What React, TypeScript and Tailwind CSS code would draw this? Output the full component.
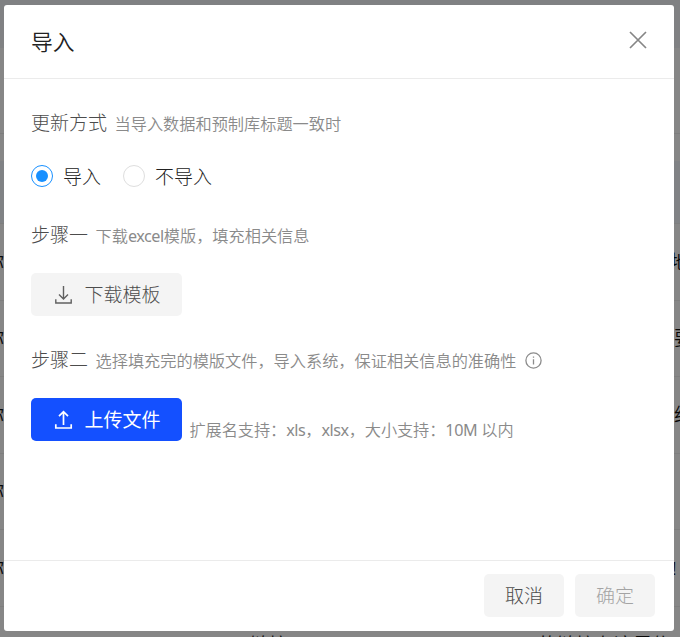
import type { ReactNode } from 'react';

const rows = [
  { left: '你', right: '地', shift: '-indent-[4px]' },
  { left: '你', right: '要', shift: '' },
  { left: '你', right: '织', shift: '' },
  { left: '你', right: '', shift: '' },
  { left: '你', right: '!', shift: '-indent-[2px]' },
];

function Backdrop() {
  return (
    <div className="h-full overflow-hidden bg-[#868686] text-[19px] leading-[24px] font-[350] text-[#080808]">
      <div className="h-[48px] bg-[#808183]" />
      <div className="h-[86px] border-b border-[#7d7d7d]" />
      <div className="h-[27px]" />
      <div className="h-[63px] border-b border-[#7e7e7e] bg-[#808285]" />
      {rows.map((row, i) => (
        <div key={i} className="flex h-[76.5px] items-center justify-between border-b border-[#7e7e7e]">
          <div className="flex w-[4px] justify-end overflow-hidden">
            <span className="shrink-0">{row.left}</span>
          </div>
          <div className={`w-[6px] overflow-hidden whitespace-nowrap ${row.shift}`}>{row.right}</div>
        </div>
      ))}
      <div className="flex h-[76px] items-center whitespace-nowrap">
        <span className="ml-[250px] w-[247px] shrink-0">链接</span>
        <span className="w-[41px] shrink-0">1</span>
        <span className="shrink-0">的链接在这里信</span>
      </div>
    </div>
  );
}

function Radio({ checked, children }: { checked?: boolean; children: ReactNode }) {
  return (
    <label className="flex items-center">
      <span
        className={
          checked
            ? 'flex size-[22px] items-center justify-center rounded-full border border-[#1890ff]'
            : 'size-[22px] rounded-full border border-[#dedede]'
        }
      >
        {checked && <span className="size-[12px] rounded-full bg-[#1890ff]" />}
      </span>
      <span className="pt-px pl-[10px] text-[19px] text-[#222222]">{children}</span>
    </label>
  );
}

function Hint({ children }: { children: ReactNode }) {
  return <span className="text-[16.2px] font-[350] text-[#8a8a8a]">{children}</span>;
}

function Latin({ children }: { children: ReactNode }) {
  return <span className="font-normal tracking-[-0.45px]">{children}</span>;
}

function TransferIcon({ up }: { up?: boolean }) {
  return (
    <svg className="size-[19px]" viewBox="0 0 19 19" fill="none" stroke="currentColor" strokeWidth={up ? 1.7 : 1.4}>
      {up ? <path d="M9.5 15V2M5 6.2 9.5 1.7 14 6.2" /> : <path d="M9.5 1V14M5 9.5 9.5 14 14 9.5" />}
      <path d="M1.8 14.2V18H17.2V14.2" />
    </svg>
  );
}

export default function App() {
  return (
    <div className="relative h-[637px] w-[680px] overflow-hidden font-['Noto_Sans','Noto_Sans_CJK_SC',sans-serif] font-light">
      <Backdrop />
      <div className="absolute top-[5px] left-[4px] flex h-[626px] w-[670px] flex-col rounded-[3px] bg-white whitespace-nowrap">
        <header className="flex h-[74px] shrink-0 items-center justify-between border-b border-[#ebebeb] pr-[27px] pl-[27px]">
          <h1 className="text-[21.8px] leading-[30px] font-[350] text-[#222222]">导入</h1>
          <svg className="mb-[3px] size-[18px]" viewBox="0 0 18 18" fill="none" stroke="#868686" strokeWidth="1.7">
            <path d="M1 1 17 17M17 1 1 17" />
          </svg>
        </header>

        <main className="flex grow flex-col px-[27px] pt-[29px] leading-[30px]">
          <div className="flex h-[30px] items-baseline gap-[7.5px]">
            <span className="text-[19px] text-[#4c4c4c]">更新方式</span>
            <Hint>当导入数据和预制库标题一致时</Hint>
          </div>
          <div className="mt-[23px] flex h-[30px] gap-[22px]">
            <Radio checked>导入</Radio>
            <Radio>不导入</Radio>
          </div>
          <div className="mt-[29px] flex h-[30px] items-baseline gap-[7.5px]">
            <span className="text-[19px] text-[#4c4c4c]">步骤一</span>
            <Hint>
              下载<Latin>excel</Latin>模版，填充相关信息
            </Hint>
          </div>
          <button className="mt-[23px] flex h-[43px] w-[151px] items-center rounded-[5px] bg-[#f4f4f4] pl-[23px] text-[19px] text-[#606060]">
            <TransferIcon />
            <span className="pl-[11.5px] text-[#4c4c4c]">下载模板</span>
          </button>
          <div className="mt-[29px] flex h-[30px] items-baseline gap-[7.5px]">
            <span className="text-[19px] text-[#4c4c4c]">步骤二</span>
            <Hint>选择填充完的模版文件，导入系统，保证相关信息的准确性</Hint>
            <svg className="ml-px size-[17px] self-center" viewBox="0 0 17 17" fill="none" stroke="#8c8c8c" strokeWidth="1.3">
              <circle cx="8.5" cy="8.5" r="7.6" />
              <path d="M8.5 7.2V12.4M8.5 4.4V5.8" />
            </svg>
          </div>
          <div className="mt-[23px] flex h-[47px] items-start gap-[7.5px]">
            <button className="flex h-[43px] w-[151px] items-center rounded-[5px] bg-[#1450ff] pl-[23px] text-[19px] font-normal text-white">
              <TransferIcon up />
              <span className="pl-[11.5px]">上传文件</span>
            </button>
            <span className="self-end tracking-[-0.08px]">
              <Hint>
                扩展名支持：<Latin>xls</Latin>，<Latin>xlsx</Latin>，大小支持：<Latin>10M</Latin> 以内
              </Hint>
            </span>
          </div>
        </main>

        <footer className="flex h-[71px] shrink-0 justify-end gap-[11px] border-t border-[#ebebeb] pt-[13px] pr-[19px] text-[19px]">
          <button className="h-[43px] w-[80px] rounded-[5px] bg-[#f4f4f4] pt-[2px] text-[#4c4c4c]">取消</button>
          <button className="h-[43px] w-[80px] rounded-[5px] bg-[#f4f4f4] pt-[2px] text-[#a4a4a4]">确定</button>
        </footer>
      </div>
    </div>
  );
}
